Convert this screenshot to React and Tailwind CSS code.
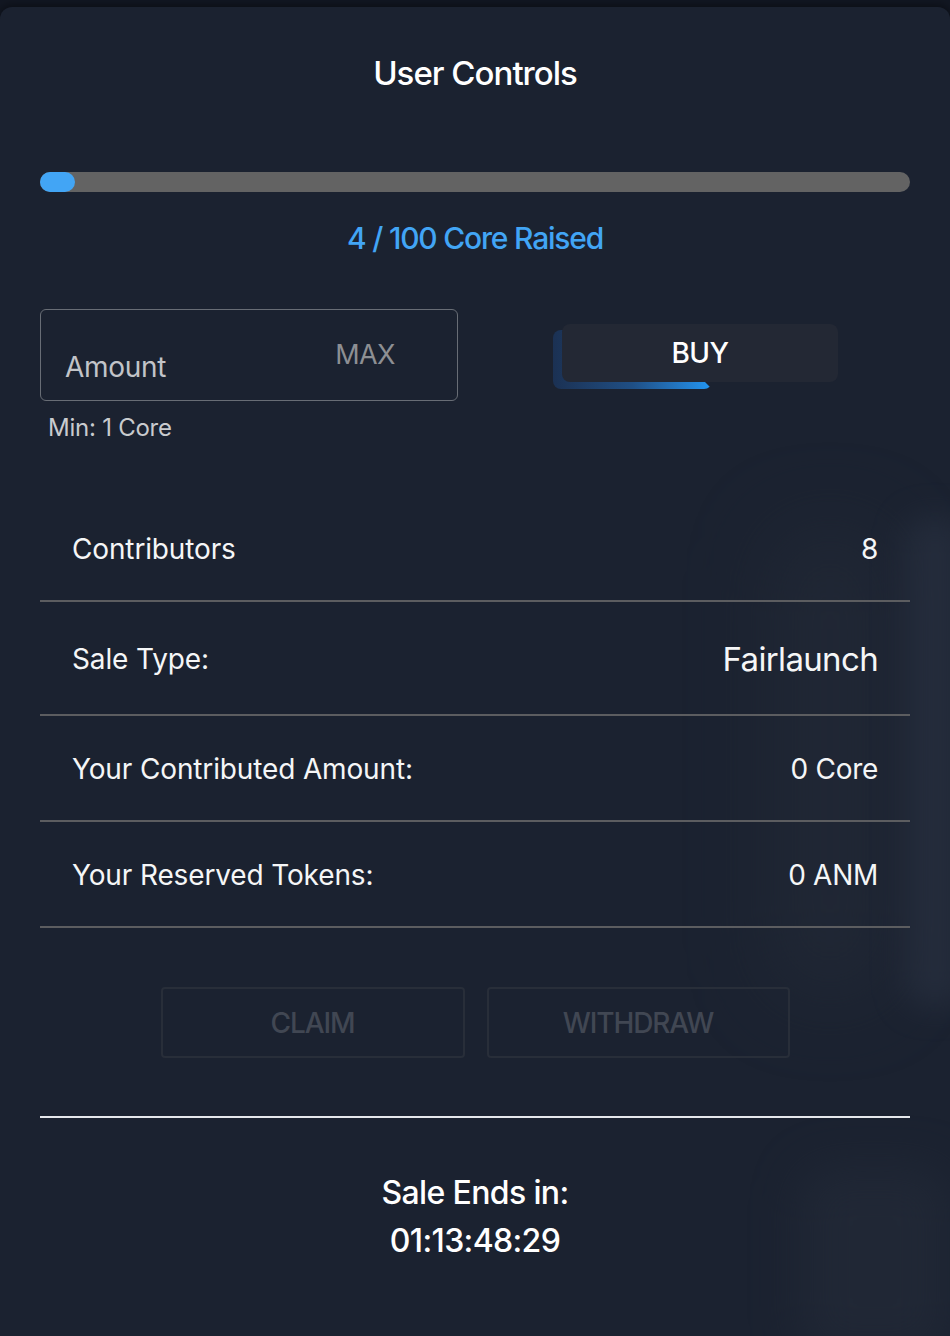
import { useState } from 'react'

const stats = [
  { label: 'Contributors', value: '8' },
  { label: 'Sale Type:', value: 'Fairlaunch', big: true },
  { label: 'Your Contributed Amount:', value: '0 Core' },
  { label: 'Your Reserved Tokens:', value: '0 ANM' },
]

function StatRow({ label, value, big }) {
  return (
    <div className="flex items-center justify-between border-b-2 border-[#5c5d60] px-8 pb-[34px] pt-[36px]">
      <span className="text-[28px] leading-[34px] tracking-[-0.005em] text-[#f5f6f7]">{label}</span>
      <span
        className={
          big
            ? 'text-[33px] leading-[42px] tracking-[-0.02em] text-[#f5f6f7]'
            : 'text-[28px] leading-[34px] tracking-[-0.01em] text-[#f5f6f7]'
        }
      >
        {value}
      </span>
    </div>
  )
}

export default function App() {
  const [amount, setAmount] = useState('')
  const raised = 4
  const hardCap = 100

  return (
    <div
      className="min-h-screen bg-[#121722] pt-[7px]"
      style={{ fontFamily: 'Inter, "Noto Sans", sans-serif' }}
    >
      <div className="relative h-[1329px] overflow-hidden rounded-t-xl bg-[#1b2230] px-10 shadow-[0_-2px_8px_rgba(0,0,0,0.4)]">
        {/* soft background shapes */}
        <div className="pointer-events-none absolute left-[770px] top-[520px] h-[470px] w-[120px] rounded-[40px] bg-[#242b38] opacity-60 blur-2xl" />
        <div className="pointer-events-none absolute left-[905px] top-[510px] h-[490px] w-[60px] rounded-[20px] bg-[#283040] opacity-70 blur-lg" />
        <div className="pointer-events-none absolute left-[800px] top-[1160px] h-[190px] w-[150px] rounded-[30px] bg-[#222937] opacity-80 blur-xl" />

        <div className="relative">
          <h1 className="pt-[46px] text-center text-[33px] font-medium leading-10 tracking-[-0.03em] text-white">
            User Controls
          </h1>

          <div className="mt-[79px] h-5 w-full rounded-full bg-[#636363]">
            <div
              className="h-5 rounded-full bg-[#42a5f5]"
              style={{ width: `${(raised / hardCap) * 100}%` }}
            />
          </div>

          <p className="mt-7 text-center text-[30px] font-medium leading-9 tracking-[-0.04em] text-[#42a5f5]">
            {raised} / {hardCap} Core Raised
          </p>

          <div className="mt-[53px] flex items-start">
            <div className="flex h-[92px] w-[418px] items-center rounded-md border border-[#686d75]">
              <input
                className="min-w-0 flex-1 bg-transparent pl-6 pt-6 text-[28px] tracking-[-0.01em] text-white outline-none placeholder:text-[#c2c4c8]"
                onChange={(event) => setAmount(event.target.value)}
                placeholder="Amount"
                value={amount}
              />
              <button
                className="pr-[62px] text-[27px] tracking-[-0.02em] text-[#8d8f93]"
                type="button"
              >
                MAX
              </button>
            </div>

            <div className="relative ml-[104px] mt-[15px] w-[276px]">
              <div className="absolute -left-[9px] top-[6px] h-[59px] w-[159px] rounded-lg bg-gradient-to-r from-[#1b3153] via-[#1f4f85] to-[#2196f3] [clip-path:polygon(0_0,calc(100%_-_7px)_0,calc(100%_-_7px)_calc(100%_-_7px),100%_100%,0_100%)]" />
              <button
                className="relative flex h-[58px] w-full items-center justify-center rounded-lg bg-[#232834] text-[28px] font-medium tracking-[-0.02em] text-white"
                type="button"
              >
                BUY
              </button>
            </div>
          </div>

          <p className="mt-[13px] pl-2 text-[24px] leading-7 tracking-[-0.01em] text-[#c9cbce]">
            Min: 1 Core
          </p>

          <div className="mt-[54px]">
            {stats.map((stat) => (
              <StatRow key={stat.label} {...stat} />
            ))}
          </div>

          <div className="mt-[59px] flex justify-center gap-[22px]">
            <button
              className="h-[71px] w-[304px] rounded-sm border-2 border-[#282e39] text-[28px] font-medium tracking-[-0.04em] text-[#414753]"
              disabled
              type="button"
            >
              CLAIM
            </button>
            <button
              className="h-[71px] w-[303px] rounded-sm border-2 border-[#282e39] text-[28px] font-medium tracking-[-0.04em] text-[#414753]"
              disabled
              type="button"
            >
              WITHDRAW
            </button>
          </div>

          <div className="mt-[58px] h-[2px] w-full bg-[#e5e7eb]" />

          <div className="mt-[55px] text-center text-[32px] font-medium leading-10 tracking-[-0.02em] text-white">
            <p>Sale Ends in:</p>
            <p className="mt-2">01:13:48:29</p>
          </div>
        </div>
      </div>
    </div>
  )
}
